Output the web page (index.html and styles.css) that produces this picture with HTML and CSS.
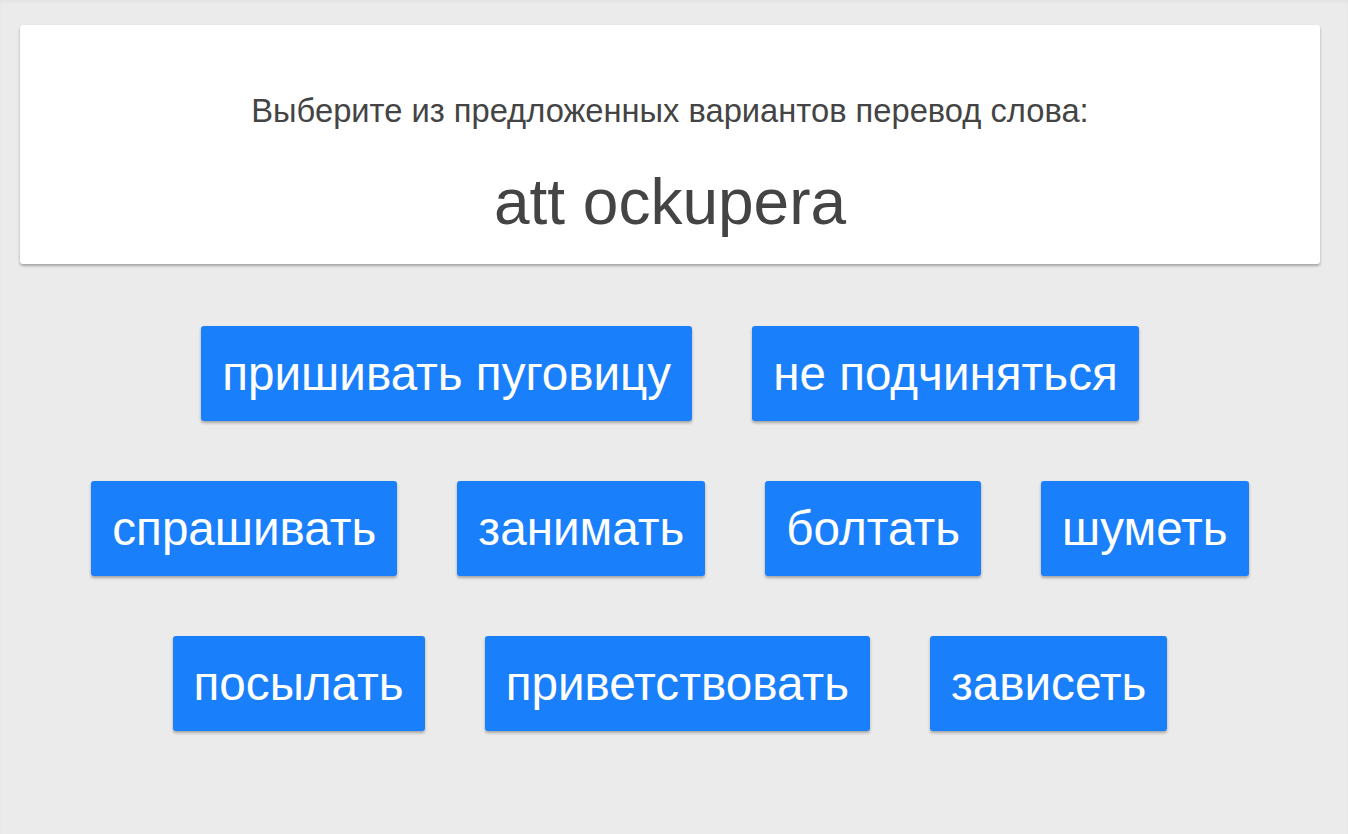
FILE: index.html
```html
<!DOCTYPE html>
<html lang="ru">
<head>
<meta charset="utf-8">
<link rel="stylesheet" href="styles.css">
</head>
<body>
<div class="page">
  <div class="card">
    <div class="prompt">Выберите из предложенных вариантов перевод слова:</div>
    <div class="word">att ockupera</div>
  </div>
  <div class="options">
    <div class="row">
      <button class="opt">пришивать пуговицу</button>
      <button class="opt">не подчиняться</button>
    </div>
    <div class="row">
      <button class="opt">спрашивать</button>
      <button class="opt">занимать</button>
      <button class="opt">болтать</button>
      <button class="opt">шуметь</button>
    </div>
    <div class="row">
      <button class="opt">посылать</button>
      <button class="opt">приветствовать</button>
      <button class="opt">зависеть</button>
    </div>
  </div>
</div>
</body>
</html>
```
FILE: styles.css
```css
html, body {
  margin: 0;
  padding: 0;
  background: #ebebeb;
  height: 100%;
}
body {
  font-family: "Liberation Sans", Arial, sans-serif;
  box-shadow: inset 0 2px 3px rgba(0,0,0,0.04);
}
.page {
  padding: 25px 28px 0 20px;
}
.card {
  background: #fff;
  border-radius: 3px;
  box-shadow: 0 2px 3px rgba(0,0,0,0.3);
  height: 239px;
  box-sizing: border-box;
  padding-top: 66px;
  text-align: center;
  color: #444;
}
.prompt {
  font-size: 32.7px;
  line-height: 40px;
}
.word {
  margin-top: 36px;
  font-size: 64px;
  line-height: 70px;
}
.options {
  margin-top: 62px;
  display: flex;
  flex-direction: column;
  gap: 60px;
}
.row {
  display: flex;
  justify-content: center;
  gap: 60px;
}
.opt {
  font-family: "Liberation Sans", Arial, sans-serif;
  background: #1a7ffb;
  color: #fff;
  border: none;
  border-radius: 3px;
  box-shadow: 0 2px 3px rgba(0,0,0,0.3);
  height: 95px;
  padding: 0 21px;
  font-size: 47.6px;
  line-height: 95px;
  cursor: pointer;
}
```
